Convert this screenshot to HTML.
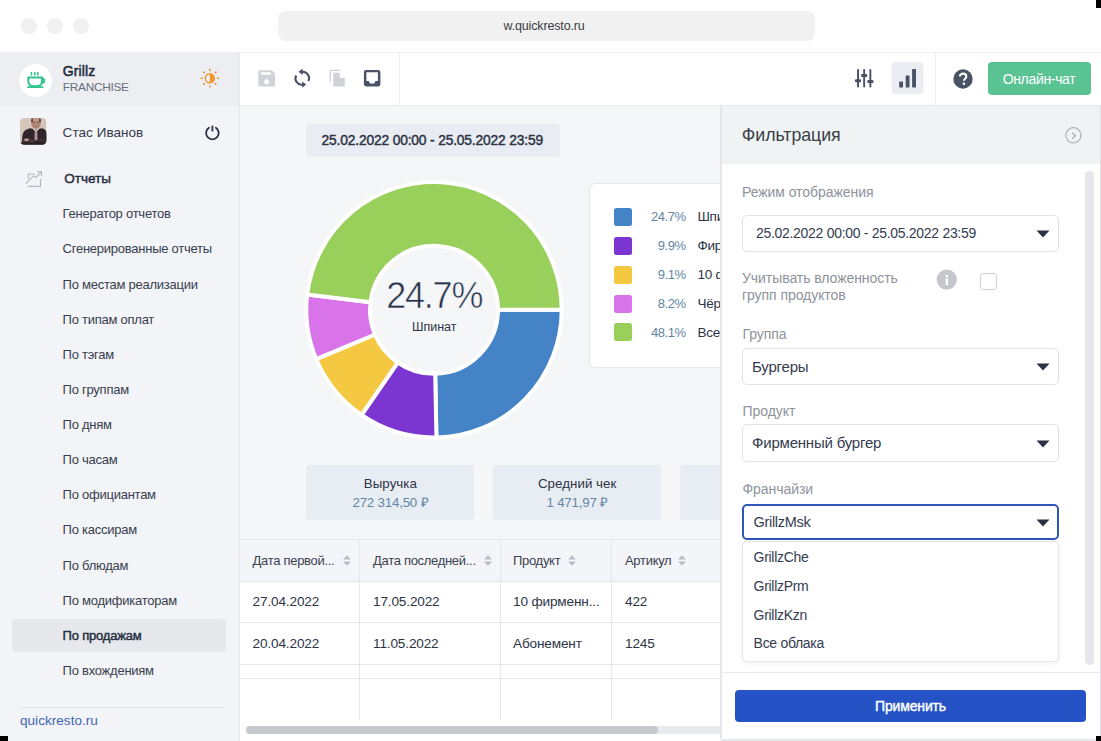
<!DOCTYPE html>
<html><head><meta charset="utf-8"><style>
html,body{margin:0;padding:0;}
body{width:1101px;height:741px;position:relative;overflow:hidden;background:#fff;font-family:"Liberation Sans", sans-serif;}
.t{position:absolute;line-height:1;white-space:nowrap;}
.b{position:absolute;box-sizing:border-box;}
svg{position:absolute;overflow:visible;}
</style></head><body>
<div class="b" style="left:21px;top:18px;width:16px;height:16px;border-radius:50%;background:#f0f0f0;"></div>
<div class="b" style="left:47px;top:18px;width:16px;height:16px;border-radius:50%;background:#f0f0f0;"></div>
<div class="b" style="left:73px;top:18px;width:16px;height:16px;border-radius:50%;background:#f0f0f0;"></div>
<div class="b" style="left:278px;top:10.5px;width:537px;height:30.5px;border-radius:8px;background:#f1f1f1;"></div>
<div class="t" style="left:503.5px;top:20px;font-size:12.5px;color:#3a3a44;letter-spacing:-0.15px;">w.quickresto.ru</div>
<div class="b" style="left:0px;top:52px;width:1101px;height:1px;background:#efefef;"></div>
<div class="b" style="left:0px;top:52.5px;width:240px;height:689px;background:#f3f4f8;"></div>
<div class="b" style="left:0px;top:52.5px;width:240px;height:53px;background:#eceef2;"></div>
<div class="b" style="left:238.5px;top:52.5px;width:1.5px;height:689px;background:#e6e8ec;"></div>
<div class="b" style="left:19px;top:64px;width:33px;height:33px;border-radius:50%;background:#fff;"></div>
<svg style="left:26px;top:70px" width="21" height="19" viewBox="0 0 21 19">
<g fill="none" stroke="#2fc48c" stroke-width="2">
<path d="M2.3 7.4 H16 V11.5 C16 14.5 13.5 16.2 10.5 16.2 H7.8 C4.8 16.2 2.3 14.5 2.3 11.5 Z"/>
<path d="M16 8.6 C19.2 8.2 19.2 13.2 15.8 12.8"/>
</g>
<rect x="1.3" y="16.2" width="16" height="1.8" fill="#2fc48c"/>
<rect x="4.7" y="2" width="1.5" height="3.5" fill="#2fc48c"/>
<rect x="8" y="2" width="1.5" height="3.5" fill="#2fc48c"/>
<rect x="11.1" y="2" width="1.5" height="3.5" fill="#2fc48c"/>
</svg>
<div class="t" style="left:62.7px;top:64px;font-size:14px;color:#222a3c;letter-spacing:0.15px;-webkit-text-stroke:0.5px #222a3c;">Grillz</div>
<div class="t" style="left:62.8px;top:82px;font-size:11.8px;color:#686e7b;letter-spacing:-0.25px;">FRANCHISE</div>
<svg style="left:0;top:0" width="240" height="200">
<g stroke="#e08f3c" stroke-width="1.5" stroke-linecap="round"><line x1="217.50" y1="78.20" x2="218.40" y2="78.20"/><line x1="215.24" y1="83.64" x2="215.88" y2="84.28"/><line x1="209.80" y1="85.90" x2="209.80" y2="86.80"/><line x1="204.36" y1="83.64" x2="203.72" y2="84.28"/><line x1="202.10" y1="78.20" x2="201.20" y2="78.20"/><line x1="204.36" y1="72.76" x2="203.72" y2="72.12"/><line x1="209.80" y1="70.50" x2="209.80" y2="69.60"/><line x1="215.24" y1="72.76" x2="215.88" y2="72.12"/></g>
<circle cx="209.8" cy="78.2" r="4.5" fill="none" stroke="#f0962c" stroke-width="1.4"/>
<path d="M209.8 73.7 A4.5 4.5 0 0 1 209.8 82.7 Z" fill="#f0962c"/>
</svg>
<svg style="left:20px;top:118.2px" width="26.5" height="26.8" viewBox="0 0 26.5 26.8">
<defs><clipPath id="avc"><rect x="0" y="0" width="26.5" height="26.8" rx="4.5"/></clipPath>
<linearGradient id="avbg" x1="0" y1="0" x2="1" y2="0"><stop offset="0" stop-color="#d6c8ba"/><stop offset="1" stop-color="#d2c3b6"/></linearGradient>
<linearGradient id="avface" x1="0" y1="0" x2="0" y2="1"><stop offset="0" stop-color="#c79e90"/><stop offset="1" stop-color="#a97a6c"/></linearGradient></defs>
<g clip-path="url(#avc)">
<rect width="26.5" height="26.8" fill="url(#avbg)"/>
<ellipse cx="16" cy="4.6" rx="4.9" ry="6.2" fill="url(#avface)"/>
<path d="M11.2 3.5 Q11 0.5 12.5 -0.5 L12.8 4.5 Z" fill="#3e2c28"/>
<path d="M20.8 3.5 Q21 0.5 19.5 -0.5 L19.2 4.5 Z" fill="#3e2c28"/>
<ellipse cx="14.2" cy="4.2" rx="0.9" ry="0.5" fill="#5a3f38"/>
<ellipse cx="17.8" cy="4.2" rx="0.9" ry="0.5" fill="#5a3f38"/>
<path d="M1.5 26.8 L2.5 17 Q3.5 11.5 10 10.2 L16 11.5 L22 10.2 Q26.5 11.5 27 16 L27.5 26.8 Z" fill="#30262a"/>
<path d="M14.8 11 L17.2 11 L17.6 21 L16 23 L14.4 21 Z" fill="#b0909a"/>
<path d="M12.5 10.8 L14.8 11 L16 14 Z" fill="#e0d6d4"/>
<path d="M19.5 10.8 L17.2 11 L16 14 Z" fill="#e0d6d4"/>
<path d="M2 21.5 Q9 18.5 15 22.5 L14 25.5 Q8 23.5 2 25.5 Z" fill="#46383b"/>
<path d="M18 21 Q22.5 19.5 26 21 L25.5 24.5 Q21.5 23 18 24 Z" fill="#3b2f33"/>
<ellipse cx="6.5" cy="21.8" rx="2.3" ry="1.3" fill="#c9a296"/>
<rect x="0" y="24.5" width="26.5" height="2.3" fill="#2a2024"/>
</g></svg>
<div class="t" style="left:62.6px;top:126px;font-size:13.5px;color:#363c4d;letter-spacing:0.05px;">Стас Иванов</div>
<svg style="left:0;top:0" width="240" height="200">
<path d="M208.9 127.8 A6.3 6.3 0 1 0 215.9 127.8" fill="none" stroke="#2b3040" stroke-width="1.8" stroke-linecap="round"/>
<line x1="212.4" y1="126.4" x2="212.4" y2="130.7" stroke="#2b3040" stroke-width="1.8" stroke-linecap="round"/>
</svg>
<svg style="left:0;top:0" width="240" height="200">
<g fill="none" stroke="#b5b9c0" stroke-width="1.2" stroke-linecap="square">
<path d="M28.4 178.4 V174 H34.2"/>
<path d="M40.5 179.5 V186.4 H28.4"/>
<path d="M26.3 183.2 L33.5 175.9 L36.1 177.4 L41.2 172"/>
<path d="M38 171.8 H41.5 V175.3"/>
</g></svg>
<div class="t" style="left:64.3px;top:172px;font-size:13.5px;color:#252d3e;-webkit-text-stroke:0.45px #252d3e;">Отчеты</div>
<div class="b" style="left:12.2px;top:618.8px;width:214.1px;height:32.8px;border-radius:4px;background:#e6e8ec;"></div>
<div class="t" style="left:62.6px;top:207px;font-size:13px;color:#373e4c;letter-spacing:-0.25px;">Генератор отчетов</div>
<div class="t" style="left:62.6px;top:242px;font-size:13px;color:#373e4c;letter-spacing:-0.25px;">Сгенерированные отчеты</div>
<div class="t" style="left:62.6px;top:278px;font-size:13px;color:#373e4c;letter-spacing:-0.25px;">По местам реализации</div>
<div class="t" style="left:62.6px;top:313px;font-size:13px;color:#373e4c;letter-spacing:-0.25px;">По типам оплат</div>
<div class="t" style="left:62.6px;top:348px;font-size:13px;color:#373e4c;letter-spacing:-0.25px;">По тэгам</div>
<div class="t" style="left:62.6px;top:383px;font-size:13px;color:#373e4c;letter-spacing:-0.25px;">По группам</div>
<div class="t" style="left:62.6px;top:418px;font-size:13px;color:#373e4c;letter-spacing:-0.25px;">По дням</div>
<div class="t" style="left:62.6px;top:453px;font-size:13px;color:#373e4c;letter-spacing:-0.25px;">По часам</div>
<div class="t" style="left:62.6px;top:488px;font-size:13px;color:#373e4c;letter-spacing:-0.25px;">По официантам</div>
<div class="t" style="left:62.6px;top:523px;font-size:13px;color:#373e4c;letter-spacing:-0.25px;">По кассирам</div>
<div class="t" style="left:62.6px;top:559px;font-size:13px;color:#373e4c;letter-spacing:-0.25px;">По блюдам</div>
<div class="t" style="left:62.6px;top:594px;font-size:13px;color:#373e4c;letter-spacing:-0.25px;">По модификаторам</div>
<div class="t" style="left:62.6px;top:629px;font-size:13px;color:#252d3e;letter-spacing:-0.2px;-webkit-text-stroke:0.45px #252d3e;">По продажам</div>
<div class="t" style="left:62.6px;top:664px;font-size:13px;color:#373e4c;letter-spacing:-0.25px;">По вхождениям</div>
<div class="b" style="left:20px;top:707px;width:203.5px;height:1px;background:#e3e5ea;"></div>
<div class="t" style="left:20px;top:714px;font-size:13.5px;color:#3f64b4;letter-spacing:0.05px;">quickresto.ru</div>
<div class="b" style="left:240px;top:53px;width:861px;height:52px;background:#fff;"></div>
<div class="b" style="left:240px;top:105px;width:861px;height:1px;background:#e6e9ec;"></div>
<div class="b" style="left:399px;top:53px;width:1px;height:52px;background:#eceef1;"></div>
<div class="b" style="left:934.5px;top:53px;width:1px;height:52px;background:#eceef1;"></div>
<svg style="left:0;top:0" width="1101" height="105">
<path d="M259.8 70.3 H271.8 L275 73.5 V84.9 A1.5 1.5 0 0 1 273.5 86.4 H259.8 A1.5 1.5 0 0 1 258.3 84.9 V71.8 A1.5 1.5 0 0 1 259.8 70.3 Z" fill="#d0d2d7"/>
<rect x="260.8" y="72.2" width="10.2" height="2.6" rx="1" fill="#fff"/>
<circle cx="266.6" cy="81.7" r="2.5" fill="#fff"/>
<g fill="none" stroke="#4b5266" stroke-width="2.1">
<path d="M301.5 72.1 A6.2 6.2 0 0 1 308.3 81.1"/>
<path d="M296.2 75.5 A6.2 6.2 0 0 0 303 84.5"/>
</g>
<path d="M298.6 71.8 L302.6 68.6 V75 Z" fill="#4b5266"/>
<path d="M306.2 84.6 L302.2 81.4 V87.8 Z" fill="#4b5266"/>
<path d="M330.3 81.7 V70.4 H340.3" fill="none" stroke="#d0d2d7" stroke-width="1.3"/>
<path d="M333.3 72.8 H339.8 L344.8 77.8 V86.4 H333.3 Z" fill="#d0d2d7"/>
<path d="M339.8 72.8 V77.8 H344.8" fill="#fff"/>
<path d="M339.8 72.8 L344.8 77.8 H339.8 Z" fill="#fff" opacity="0.9"/>
<path d="M366 69.9 H378.3 A2.1 2.1 0 0 1 380.4 72 V84.3 A2.1 2.1 0 0 1 378.3 86.4 H366 A2.1 2.1 0 0 1 363.9 84.3 V72 A2.1 2.1 0 0 1 366 69.9 Z M366.4 72.2 V81.1 H368.8 L370 83.6 H374.3 L375.5 81.1 H377.9 V72.2 Z" fill="#4b5266" fill-rule="evenodd"/>
<g fill="#4b5266">
<rect x="857.1" y="68.9" width="1.9" height="18.5" rx="0.9"/>
<rect x="863.2" y="68.9" width="1.9" height="18.5" rx="0.9"/>
<rect x="869.4" y="68.9" width="1.9" height="18.5" rx="0.9"/>
<rect x="854.9" y="79.3" width="6.2" height="3" rx="1.2"/>
<rect x="861.1" y="74" width="6.2" height="3" rx="1.2"/>
<rect x="867.3" y="80.1" width="6.2" height="3" rx="1.2"/>
</g>
<rect x="891.5" y="62" width="32.1" height="32.3" rx="4" fill="#ecedf2"/>
<g fill="#4b5266">
<rect x="899.2" y="81.5" width="3.8" height="6.1" rx="0.5"/>
<rect x="905.7" y="75.4" width="3.8" height="12.2" rx="0.5"/>
<rect x="912.1" y="69" width="3.9" height="18.6" rx="0.5"/>
</g>
</svg>
<svg style="left:952.5px;top:68.5px" width="20" height="20" viewBox="0 0 20 20">
<circle cx="10" cy="10" r="9.7" fill="#4b5266"/>
<path d="M6.9 7.6 C6.9 5.6 8.3 4.6 10.1 4.6 C12 4.6 13.3 5.7 13.3 7.4 C13.3 9.6 10.9 9.8 10.9 11.8" fill="none" stroke="#fff" stroke-width="2.1"/>
<circle cx="10.9" cy="14.8" r="1.3" fill="#fff"/>
</svg>
<div class="b" style="left:987.5px;top:62px;width:103px;height:32.6px;border-radius:4px;background:#5ac394;"></div>
<div class="t" style="left:987.50px;width:103px;text-align:center;top:72px;font-size:14px;color:#fff;letter-spacing:-0.33px;">Онлайн-чат</div>
<div class="b" style="left:240px;top:106px;width:481px;height:635px;background:#f4f6f8;"></div>
<div class="b" style="left:306px;top:124px;width:254.4px;height:32.5px;border-radius:3px;background:#e9edf3;"></div>
<div class="t" style="left:321.5px;top:134px;font-size:13.8px;color:#2d3446;letter-spacing:-0.16px;-webkit-text-stroke:0.45px #2d3446;">25.02.2022 00:00 - 25.05.2022 23:59</div>
<svg style="left:0;top:0" width="1101" height="741"><path d="M561.70 309.80 A127.7 127.7 0 0 1 436.41 437.48 L435.21 373.79 A64.0 64.0 0 0 0 498.00 309.80 Z" fill="#4383c6" stroke="#fff" stroke-width="4" stroke-linejoin="miter"/><path d="M436.41 437.48 A127.7 127.7 0 0 1 361.56 414.97 L397.69 362.51 A64.0 64.0 0 0 0 435.21 373.79 Z" fill="#7b35d1" stroke="#fff" stroke-width="4" stroke-linejoin="miter"/><path d="M361.56 414.97 A127.7 127.7 0 0 1 316.17 359.04 L374.95 334.48 A64.0 64.0 0 0 0 397.69 362.51 Z" fill="#f5c842" stroke="#fff" stroke-width="4" stroke-linejoin="miter"/><path d="M316.17 359.04 A127.7 127.7 0 0 1 307.21 294.59 L370.46 302.18 A64.0 64.0 0 0 0 374.95 334.48 Z" fill="#d873ea" stroke="#fff" stroke-width="4" stroke-linejoin="miter"/><path d="M307.21 294.59 A127.7 127.7 0 0 1 561.70 309.80 L498.00 309.80 A64.0 64.0 0 0 0 370.46 302.18 Z" fill="#99cf5b" stroke="#fff" stroke-width="4" stroke-linejoin="miter"/></svg>
<div class="t" style="left:364.20px;width:140px;text-align:center;top:278px;font-size:36px;color:#27324a;letter-spacing:-1.2px;-webkit-text-stroke:0.6px #f3f5f8;">24.7%</div>
<div class="t" style="left:394.20px;width:80px;text-align:center;top:321px;font-size:12.5px;color:#2d3446;">Шпинат</div>
<div class="b" style="left:588.5px;top:182.5px;width:200px;height:185px;border:1px solid #e4e7ea;border-radius:6px;background:#fff;"></div>
<div class="b" style="left:614.2px;top:207.8px;width:18px;height:18px;border-radius:2.5px;background:#4383c6;"></div>
<div class="t" style="left:625.60px;width:60px;text-align:right;top:210px;font-size:13px;color:#5f84a2;letter-spacing:-0.45px;">24.7%</div>
<div class="t" style="left:697.4px;top:210px;font-size:13.5px;color:#2d3446;letter-spacing:-0.2px;">Шпинат</div>
<div class="b" style="left:614.2px;top:236.70000000000002px;width:18px;height:18px;border-radius:2.5px;background:#7b35d1;"></div>
<div class="t" style="left:625.60px;width:60px;text-align:right;top:239px;font-size:13px;color:#5f84a2;letter-spacing:-0.45px;">9.9%</div>
<div class="t" style="left:697.4px;top:239px;font-size:13.5px;color:#2d3446;letter-spacing:-0.2px;">Фирменный бургер</div>
<div class="b" style="left:614.2px;top:265.6px;width:18px;height:18px;border-radius:2.5px;background:#f5c842;"></div>
<div class="t" style="left:625.60px;width:60px;text-align:right;top:268px;font-size:13px;color:#5f84a2;letter-spacing:-0.45px;">9.1%</div>
<div class="t" style="left:697.4px;top:268px;font-size:13.5px;color:#2d3446;letter-spacing:-0.2px;">10 фирменных</div>
<div class="b" style="left:614.2px;top:294.5px;width:18px;height:18px;border-radius:2.5px;background:#d873ea;"></div>
<div class="t" style="left:625.60px;width:60px;text-align:right;top:297px;font-size:13px;color:#5f84a2;letter-spacing:-0.45px;">8.2%</div>
<div class="t" style="left:697.4px;top:297px;font-size:13.5px;color:#2d3446;letter-spacing:-0.2px;">Чёрный бургер</div>
<div class="b" style="left:614.2px;top:323.4px;width:18px;height:18px;border-radius:2.5px;background:#99cf5b;"></div>
<div class="t" style="left:625.60px;width:60px;text-align:right;top:326px;font-size:13px;color:#5f84a2;letter-spacing:-0.45px;">48.1%</div>
<div class="t" style="left:697.4px;top:326px;font-size:13.5px;color:#2d3446;letter-spacing:-0.2px;">Все остальные</div>
<div class="b" style="left:306.4px;top:465px;width:168px;height:55px;border-radius:3px;background:#e8edf3;"></div>
<div class="t" style="left:310.40px;width:160px;text-align:center;top:477px;font-size:13.3px;color:#2d3446;letter-spacing:0.05px;">Выручка</div>
<div class="t" style="left:310.40px;width:160px;text-align:center;top:496px;font-size:13.3px;color:#6088a6;letter-spacing:-0.2px;">272 314,50 ₽</div>
<div class="b" style="left:493.2px;top:465px;width:168px;height:55px;border-radius:3px;background:#e8edf3;"></div>
<div class="t" style="left:497.20px;width:160px;text-align:center;top:477px;font-size:13.3px;color:#2d3446;letter-spacing:0.05px;">Средний чек</div>
<div class="t" style="left:497.20px;width:160px;text-align:center;top:496px;font-size:13.3px;color:#6088a6;letter-spacing:-0.2px;">1 471,97 ₽</div>
<div class="b" style="left:680.0px;top:465px;width:168px;height:55px;border-radius:3px;background:#e8edf3;"></div>
<div class="t" style="left:684.00px;width:160px;text-align:center;top:477px;font-size:13.3px;color:#2d3446;letter-spacing:0.05px;">Заказов</div>
<div class="t" style="left:684.00px;width:160px;text-align:center;top:496px;font-size:13.3px;color:#6088a6;letter-spacing:-0.2px;">185</div>
<div class="b" style="left:240px;top:538.5px;width:481px;height:202.5px;background:#fff;"></div>
<div class="b" style="left:240px;top:538.5px;width:481px;height:43px;background:#f4f5f8;"></div>
<div class="b" style="left:240px;top:538.5px;width:481px;height:1px;background:#e5e7eb;"></div>
<div class="b" style="left:240px;top:581px;width:481px;height:1px;background:#e5e7eb;"></div>
<div class="b" style="left:240px;top:622.2px;width:481px;height:1px;background:#e5e7eb;"></div>
<div class="b" style="left:240px;top:664px;width:481px;height:1px;background:#e5e7eb;"></div>
<div class="b" style="left:240px;top:678px;width:481px;height:1px;background:#e5e7eb;"></div>
<div class="b" style="left:359px;top:538.5px;width:1px;height:181px;background:#e5e7eb;"></div>
<div class="b" style="left:499.8px;top:538.5px;width:1px;height:181px;background:#e5e7eb;"></div>
<div class="b" style="left:611.4px;top:538.5px;width:1px;height:181px;background:#e5e7eb;"></div>
<div class="t" style="left:252.6px;top:554px;font-size:13px;color:#3a4150;letter-spacing:-0.3px;">Дата первой...</div>
<svg style="left:342.8px;top:554.5px" width="8" height="11" viewBox="0 0 8 11"><path d="M4 0.3 L7.9 4.4 H0.1 Z M4 10.7 L7.9 6.6 H0.1 Z" fill="#b8bcc3"/></svg>
<div class="t" style="left:373px;top:554px;font-size:13px;color:#3a4150;letter-spacing:-0.3px;">Дата последней...</div>
<svg style="left:483.9px;top:554.5px" width="8" height="11" viewBox="0 0 8 11"><path d="M4 0.3 L7.9 4.4 H0.1 Z M4 10.7 L7.9 6.6 H0.1 Z" fill="#b8bcc3"/></svg>
<div class="t" style="left:513px;top:554px;font-size:13px;color:#3a4150;letter-spacing:-0.3px;">Продукт</div>
<svg style="left:568px;top:554.5px" width="8" height="11" viewBox="0 0 8 11"><path d="M4 0.3 L7.9 4.4 H0.1 Z M4 10.7 L7.9 6.6 H0.1 Z" fill="#b8bcc3"/></svg>
<div class="t" style="left:625px;top:554px;font-size:13px;color:#3a4150;letter-spacing:-0.3px;">Артикул</div>
<svg style="left:678px;top:554.5px" width="8" height="11" viewBox="0 0 8 11"><path d="M4 0.3 L7.9 4.4 H0.1 Z M4 10.7 L7.9 6.6 H0.1 Z" fill="#b8bcc3"/></svg>
<div class="t" style="left:252.6px;top:595px;font-size:13.6px;color:#2d3446;letter-spacing:-0.15px;">27.04.2022</div>
<div class="t" style="left:373px;top:595px;font-size:13.6px;color:#2d3446;letter-spacing:-0.15px;">17.05.2022</div>
<div class="t" style="left:513px;top:595px;font-size:13.6px;color:#2d3446;letter-spacing:-0.15px;">10 фирменн...</div>
<div class="t" style="left:625px;top:595px;font-size:13.6px;color:#2d3446;letter-spacing:-0.15px;">422</div>
<div class="t" style="left:252.6px;top:637px;font-size:13.6px;color:#2d3446;letter-spacing:-0.15px;">20.04.2022</div>
<div class="t" style="left:373px;top:637px;font-size:13.6px;color:#2d3446;letter-spacing:-0.15px;">11.05.2022</div>
<div class="t" style="left:513px;top:637px;font-size:13.6px;color:#2d3446;letter-spacing:-0.15px;">Абонемент</div>
<div class="t" style="left:625px;top:637px;font-size:13.6px;color:#2d3446;letter-spacing:-0.15px;">1245</div>
<div class="b" style="left:245.8px;top:725.7px;width:480px;height:8px;border-radius:4px;background:#e9eaed;"></div>
<div class="b" style="left:245.8px;top:725.7px;width:412.5px;height:8px;border-radius:4px;background:#c8c9ce;"></div>
<div class="b" style="left:720px;top:106px;width:381px;height:633px;background:#fff;border-left:2px solid #e3e6ea;"></div>
<div class="b" style="left:722px;top:106px;width:379px;height:58px;background:#eff3f4;"></div>
<div class="t" style="left:741.8px;top:127px;font-size:17.8px;color:#3b3f48;letter-spacing:-0.05px;">Фильтрация</div>
<svg style="left:0;top:0" width="1101" height="200">
<circle cx="1073.4" cy="135.3" r="7.6" fill="none" stroke="#b3b6bb" stroke-width="1.3"/>
<path d="M1072.4 132.9 L1075.2 135.7 L1072.4 138.6" fill="none" stroke="#9a9ea5" stroke-width="1.1"/>
</svg>
<div class="b" style="left:1085.1px;top:171px;width:8.7px;height:494px;border-radius:4.3px;background:#e6e7eb;"></div>
<div class="b" style="left:1100px;top:106px;width:1px;height:633px;background:#dfe1e5;"></div>
<div class="t" style="left:742px;top:185px;font-size:14px;color:#8e939b;letter-spacing:-0.06px;">Режим отображения</div>
<div class="b" style="left:742px;top:214.9px;width:316.5px;height:37.2px;border:1px solid #dfe2e6;border-radius:5px;background:#fff;"></div>
<svg style="left:1036px;top:230.0px" width="14" height="8" viewBox="0 0 14 8"><path d="M0.5 0.5 H13.5 L7 7.5 Z" fill="#2b3142"/></svg>
<div class="t" style="left:756px;top:226px;font-size:14px;color:#343b4f;letter-spacing:-0.3px;">25.02.2022 00:00 - 25.05.2022 23:59</div>
<div class="t" style="left:742px;top:271px;font-size:14px;color:#8e939b;letter-spacing:-0.06px;">Учитывать вложенность</div>
<div class="t" style="left:742px;top:288px;font-size:14px;color:#8e939b;letter-spacing:-0.06px;">групп продуктов</div>
<svg style="left:0;top:0" width="1101" height="320">
<circle cx="946.8" cy="279.6" r="10.2" fill="#c5c6cc"/>
<rect x="945.6" y="274.9" width="2.5" height="2.2" fill="#fff"/>
<rect x="945.6" y="278.5" width="2.5" height="6.5" fill="#fff"/>
</svg>
<div class="b" style="left:980.2px;top:272.9px;width:17.2px;height:17px;border:1.5px solid #cdd0d5;border-radius:3px;background:#fff;"></div>
<div class="t" style="left:742.5px;top:327px;font-size:14px;color:#8e939b;letter-spacing:-0.06px;">Группа</div>
<div class="b" style="left:742px;top:348.3px;width:316.5px;height:37.2px;border:1px solid #dfe2e6;border-radius:5px;background:#fff;"></div>
<svg style="left:1036px;top:363.40000000000003px" width="14" height="8" viewBox="0 0 14 8"><path d="M0.5 0.5 H13.5 L7 7.5 Z" fill="#2b3142"/></svg>
<div class="t" style="left:752px;top:359px;font-size:15px;color:#343b4f;letter-spacing:-0.2px;">Бургеры</div>
<div class="t" style="left:742.5px;top:404px;font-size:14px;color:#8e939b;letter-spacing:-0.06px;">Продукт</div>
<div class="b" style="left:742px;top:424.4px;width:316.5px;height:37.3px;border:1px solid #dfe2e6;border-radius:5px;background:#fff;"></div>
<svg style="left:1036px;top:439.54999999999995px" width="14" height="8" viewBox="0 0 14 8"><path d="M0.5 0.5 H13.5 L7 7.5 Z" fill="#2b3142"/></svg>
<div class="t" style="left:752px;top:435px;font-size:15px;color:#343b4f;letter-spacing:-0.2px;">Фирменный бургер</div>
<div class="t" style="left:742.5px;top:482px;font-size:14px;color:#8e939b;letter-spacing:-0.06px;">Франчайзи</div>
<div class="b" style="left:742px;top:504.0px;width:316.5px;height:36px;border:2px solid #2f56b8;border-radius:5px;background:#fff;"></div>
<svg style="left:1036px;top:518.5px" width="14" height="8" viewBox="0 0 14 8"><path d="M0.5 0.5 H13.5 L7 7.5 Z" fill="#2b3142"/></svg>
<div class="t" style="left:753.5px;top:515px;font-size:14.5px;color:#343b4f;letter-spacing:-0.3px;">GrillzMsk</div>
<div class="b" style="left:742px;top:540.5px;width:316.5px;height:121.5px;border:1px solid #e2e5e9;border-radius:5px;background:#fff;box-shadow:0 1px 4px rgba(0,0,0,0.07);"></div>
<div class="t" style="left:753.6px;top:550px;font-size:14px;color:#343b4f;letter-spacing:-0.3px;">GrillzChe</div>
<div class="t" style="left:753.6px;top:579px;font-size:14px;color:#343b4f;letter-spacing:-0.3px;">GrillzPrm</div>
<div class="t" style="left:753.6px;top:608px;font-size:14px;color:#343b4f;letter-spacing:-0.3px;">GrillzKzn</div>
<div class="t" style="left:753.6px;top:636px;font-size:14px;color:#343b4f;letter-spacing:-0.3px;">Все облака</div>
<div class="b" style="left:722px;top:672px;width:379px;height:1px;background:#e8eaee;"></div>
<div class="b" style="left:735px;top:689.7px;width:351px;height:32.5px;border-radius:4px;background:#2553c5;"></div>
<div class="t" style="left:810.50px;width:200px;text-align:center;top:699px;font-size:14px;color:#fff;letter-spacing:-0.15px;-webkit-text-stroke:0.4px #fff;">Применить</div>
<div class="b" style="left:720.5px;top:738.5px;width:380.5px;height:2.5px;background:#e6e8eb;"></div>
<div class="b" style="left:1096px;top:0px;width:5px;height:8px;background:#000;"></div>
<div class="b" style="left:1096px;top:736px;width:5px;height:5px;background:#000;"></div>
<div class="b" style="left:0px;top:736px;width:8px;height:5px;background:#000;"></div>
</body></html>
